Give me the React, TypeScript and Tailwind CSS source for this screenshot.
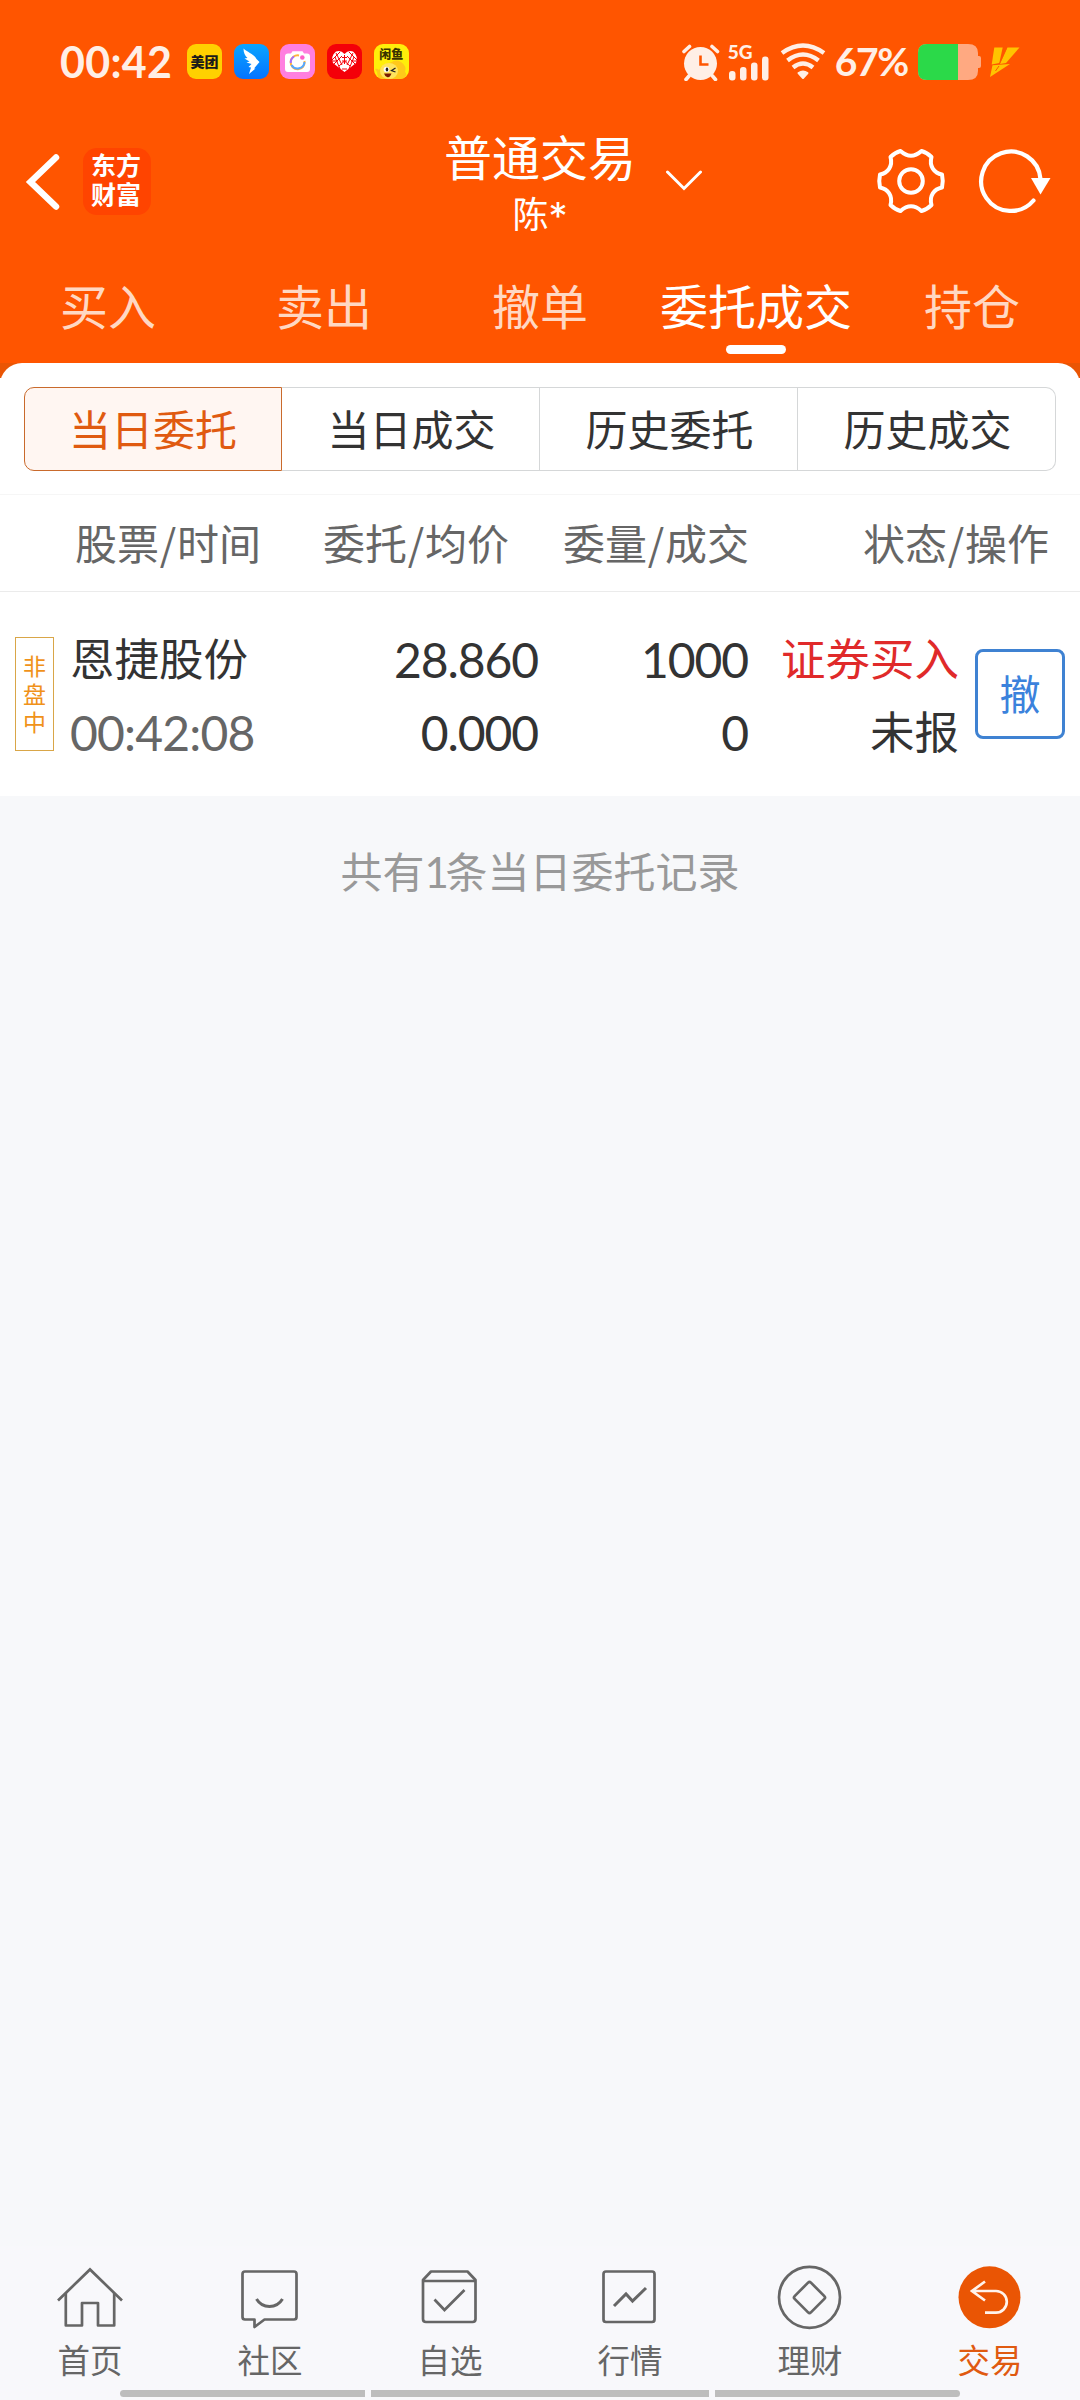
import type { ReactNode } from 'react'

const tabs = ['买入', '卖出', '撤单', '委托成交', '持仓']
const segments = ['当日委托', '当日成交', '历史委托', '历史成交']

const orders = [
  {
    tag: ['非', '盘', '中'],
    name: '恩捷股份',
    time: '00:42:08',
    price: '28.860',
    avg: '0.000',
    qty: '1000',
    done: '0',
    side: '证券买入',
    status: '未报',
  },
]

function AppBadges() {
  return (
    <div className="flex gap-[11.7px]">
      <div className="flex h-[35px] w-[35px] items-center justify-center rounded-[9px] bg-[#ffd100] pb-[1px] text-[14px] leading-none font-black text-[#1a1a1a]">
        美团
      </div>
      <svg className="h-[35px] w-[35px]" viewBox="0 0 35 35">
        <defs>
          <linearGradient id="ding" x1="0" y1="0" x2="0" y2="1">
            <stop offset="0" stopColor="#0aa5ff" />
            <stop offset="1" stopColor="#0573ff" />
          </linearGradient>
        </defs>
        <rect width="35" height="35" rx="9" fill="url(#ding)" />
        <path d="M9.500 4.500C13 8 20 10 22.500 15L25.500 18L20 24.500L21.500 24.500L15 30L17 23.500L14.500 23L17.500 20L12.500 18.500L15.500 17.500L10.500 14.500L13.500 14C11 12 9.500 8.500 9.500 4.500Z" fill="#fff" />
      </svg>
      <svg className="h-[35px] w-[35px]" viewBox="0 0 35 35">
        <rect width="35" height="35" rx="9" fill="#ff7fe0" />
        <path d="M8 9.500H11L12.500 7.300H22.500L24 9.500H27Q30 9.500 30 12.500V25Q30 28 27 28H8Q5 28 5 25V12.500Q5 9.500 8 9.500Z" fill="#fff" />
        <path d="M19 11.500A7 7 0 1 0 24.500 17" fill="none" stroke="#ffb13d" strokeWidth="2" />
        <path d="M11.500 21A7 7 0 0 0 24.500 18" fill="none" stroke="#55a8ff" strokeWidth="2" />
        <path d="M10.800 19A7 7 0 0 1 14 12.500" fill="none" stroke="#a86bff" strokeWidth="2" />
        <circle cx="22.300" cy="13.500" r="2.300" fill="#ff5fc8" />
      </svg>
      <svg className="h-[35px] w-[35px]" viewBox="0 0 35 35">
        <rect width="35" height="35" rx="9" fill="#f40009" />
        <path d="M17.500 28L6 19Q3.500 12 9 7.500Q14 6 17.500 10Q21 6 26 7.500Q31.500 12 29 19Z" fill="#fff" />
        <path d="M5 16L13 8M7 20L15 12M13 25L8 13M15 21L9 9M30 16L22 8M28 20L20 12M22 25L27 13M20 21L26 9M11 17H5M24 17H30M12 22L17.500 17L23 22M15 13.500H20M17.500 11V20M15 17H20M15 25L20 25" fill="none" stroke="#f40009" strokeWidth="1" />
      </svg>
      <div className="relative h-[35px] w-[35px] overflow-hidden rounded-[9px] bg-[#ffef0a]">
        <div className="pt-[3px] text-center text-[12px] leading-[13px] font-black text-[#3a3200]">闲鱼</div>
        <svg className="absolute inset-0" viewBox="0 0 35 35">
          <path d="M5 35Q3 31 3 28L1 25Q3 24 5 26Q9 19 17 18.500Q22 15 27 18Q33 22 31 28Q34 30 30 35Z" fill="#ffc91a" />
          <ellipse cx="15" cy="27" rx="9" ry="8" fill="#ffe45c" />
          <circle cx="12.500" cy="25.500" r="2.800" fill="#fff" />
          <ellipse cx="13" cy="25.500" rx="1.300" ry="2" fill="#222" />
          <path d="M21.500 24L17.500 26.500L21.500 28" fill="none" stroke="#222" strokeWidth="1.300" />
          <path d="M10 29.500H17.500Q16 34 13 33Q11 32.500 10 29.500Z" fill="#7a1a00" />
        </svg>
      </div>
    </div>
  )
}

function StatusBar() {
  return (
    <div className="flex h-[123px] items-center text-[#ffefe6]">
      <div className="w-[127px] pl-[60px] font-[Lato] text-[43px] leading-none font-bold tracking-[0.300px] whitespace-nowrap">00:42</div>
      <div className="ml-[60px]">
        <AppBadges />
      </div>
      <svg className="ml-[273px] h-[38px] w-[38px] shrink-0" viewBox="0 0 38 38">
        <circle cx="18.500" cy="20.500" r="16.500" fill="currentColor" />
        <path d="M2 8.500L7.500 3.500M35.500 8.500L30 3.500M7 33L4 36.500M30.500 33L33.500 36.500" stroke="currentColor" strokeWidth="3.600" strokeLinecap="round" />
        <path d="M18.500 12.500V21.500H26.500" fill="none" stroke="#ff5500" strokeWidth="2.600" />
      </svg>
      <div className="ml-[8px] flex h-[38px] w-[44px] flex-col">
        <div className="pt-[1px] font-[Lato] text-[19px] leading-[15px] font-black">5G</div>
        <svg className="-mt-[4px] h-[26px] w-[44px]" viewBox="0 0 44 26" fill="currentColor">
          <rect x="1" y="16" width="6.500" height="9.500" rx="3" />
          <rect x="12" y="12" width="6.500" height="13.500" rx="3" />
          <rect x="23" y="7.500" width="6.500" height="18" rx="3" />
          <rect x="34" y="1.500" width="6.500" height="24" rx="3" />
        </svg>
      </div>
      <svg className="ml-[8px] h-[38px] w-[46px]" viewBox="0 0 46 38" fill="none" stroke="currentColor" strokeWidth="4.400">
        <path d="M2 10Q23 -5 44 10" />
        <path d="M7.500 17.500Q23 5.500 38.500 17.500" />
        <path d="M13 24.500Q23 16.500 33 24.500" />
        <path d="M18.500 30Q23 27 27.500 30L23 35Z" fill="currentColor" strokeWidth="2" strokeLinejoin="round" />
      </svg>
      <div className="ml-[9px] w-[83px] font-[Lato] text-[39px] leading-none font-bold tracking-[-1.400px]">67%</div>
      <svg className="h-[36px] w-[64px]" viewBox="0 0 64 36">
        <path d="M9 0H50Q60 0 60 9V12H61Q63 12 63 14V22Q63 24 61 24H60V27Q60 36 50 36H9Q0 36 0 27V9Q0 0 9 0Z" fill="#ffa981" />
        <path d="M9 0H40V36H9Q0 36 0 27V9Q0 0 9 0Z" fill="#2bd949" />
      </svg>
      <svg className="ml-[7px] h-[32px] w-[32px]" viewBox="0 0 32 32" fill="#ffc400">
        <path d="M5.300 1.500H13.700L10.300 17L2.700 18.500Z" />
        <path d="M18.300 1.500H30.500L17 17L10.800 18Z" />
        <path d="M3.500 19.300L21 18L1 31Z" />
        <path d="M10 20L6.500 25" fill="none" stroke="#ff5500" strokeWidth="1" />
        <path d="M18 1.500L10.500 18" fill="none" stroke="#ff5500" strokeWidth="0.800" />
      </svg>
    </div>
  )
}

function TitleBar() {
  return (
    <div className="flex h-[117px] items-center text-white">
      <div className="flex w-[415px] items-center pl-[25px]">
        <svg className="h-[60px] w-[36px]" viewBox="0 0 36 60" fill="none" stroke="currentColor" strokeWidth="6.500" strokeLinecap="round">
          <path d="M31 5.500L5.500 30L31 54.500" />
        </svg>
        <div className="ml-[22px] flex h-[67px] w-[68px] flex-col items-center justify-center rounded-[14px] bg-[#ff4400] pr-[2px] pb-[5px] text-[25px] leading-[29px] font-bold">
          <span>东方</span>
          <span>财富</span>
        </div>
      </div>
      <div className="w-[250px] pt-[5px] text-center">
        <div className="text-[48px] leading-[60px]">普通交易</div>
        <div className="flex justify-center text-[36px] leading-[54px]">
          陈<span className="pt-[4px] font-[Inter] text-[38px] leading-[54px]">*</span>
        </div>
      </div>
      <svg className="h-[24px] w-[38px]" viewBox="0 0 38 24" fill="none" stroke="currentColor" strokeWidth="3" strokeLinecap="round">
        <path d="M2.500 2L19 18.500L35.500 2" />
      </svg>
      <svg className="ml-[172px] h-[72px] w-[72px]" viewBox="-36 -35 72 72" fill="none" stroke="currentColor" strokeWidth="4" strokeLinejoin="round">
        <path d="M-10.500 -30Q0 -20.500 10.500 -30Q16 -28.500 20.500 -24C18 -15 23 -8 31 -6.500Q32.500 0 31 6.500C23 8 18 15 20.500 24Q16 28.500 10.500 30Q0 20.500 -10.500 30Q-16 28.500 -20.500 24C-18 15 -23 8 -31 6.500Q-32.500 0 -31 -6.500C-23 -8 -18 -15 -20.500 -24Q-16 -28.500 -10.500 -30Z" />
        <circle r="11.800" />
      </svg>
      <svg className="ml-[28px] h-[72px] w-[80px]" viewBox="-36 -35 80 72">
        <path d="M29.500 -2A29.700 29.700 0 1 0 22.500 19.500" fill="none" stroke="currentColor" strokeWidth="4.200" strokeLinecap="round" />
        <path d="M20 -3H39.500L29.500 13.500Z" fill="currentColor" />
      </svg>
    </div>
  )
}

function Tabs() {
  return (
    <div className="grid h-[123px] grid-cols-5 text-[48px]">
      {tabs.map((t) => {
        const active = t === '委托成交'
        return (
          <div key={t} className={active ? 'flex flex-col items-center text-white' : 'flex flex-col items-center text-[#ffd8c3]'}>
            <div className="pt-[28px] leading-[72px] whitespace-nowrap">{t}</div>
            {active && <div className="mt-[5px] h-[9px] w-[60px] rounded-full bg-white" />}
          </div>
        )
      })}
    </div>
  )
}

function Segments() {
  return (
    <div className="mx-[24px] mt-[24px] flex h-[84px] text-[42px] text-[#333]">
      {segments.map((s, i) => (
        <div
          key={s}
          className={
            i === 0
              ? 'flex w-[258px] items-center justify-center rounded-l-[10px] border border-[#c96a2c] bg-[#fff6f2] pb-[3px] text-[#e05a10]'
              : i === 3
                ? 'flex w-[258px] items-center justify-center rounded-r-[10px] border border-l-0 border-[#d5d7d8] pb-[3px] pl-[2px]'
                : 'flex w-[258px] items-center justify-center border border-l-0 border-[#d5d7d8] pb-[3px] pl-[2px]'
          }
        >
          {s}
        </div>
      ))}
    </div>
  )
}

function HeadCell({ a, b, className }: { a: string; b: string; className: string }) {
  return (
    <div className={className}>
      {a}
      <span className="inline-block w-[18px] text-center">/</span>
      {b}
    </div>
  )
}

function OrderTable() {
  return (
    <div>
      <div className="mt-[23px] flex h-[98px] items-center border-y border-t-[#f6f6f6] border-b-[#ebebeb] pb-[3px] text-[42px] text-[#666]">
        <HeadCell a="股票" b="时间" className="w-[261px] text-right" />
        <HeadCell a="委托" b="均价" className="w-[248px] text-right" />
        <HeadCell a="委量" b="成交" className="w-[240px] text-right" />
        <HeadCell a="状态" b="操作" className="w-[300px] text-right" />
      </div>
      {orders.map((o) => (
        <div key={o.time} className="flex h-[204px] text-[44.500px] leading-[73px] text-[#333]">
          <div className="mt-[45px] ml-[15px] flex h-[114px] w-[39px] shrink-0 flex-col items-center justify-center border border-[#d9a648] pb-[3px] text-[23px] leading-[28px] text-[#f0921a]">
            {o.tag.map((c) => (
              <span key={c}>{c}</span>
            ))}
          </div>
          <div className="mt-[28px] ml-[16px] w-[230px]">
            <div>{o.name}</div>
            <div className="pt-[3px] font-[Lato] text-[48px] leading-[73px] tracking-[-0.800px] text-[#666]">{o.time}</div>
          </div>
          <div className="mt-[31px] w-[238px] text-right font-[Lato] text-[48px] tracking-[-1.100px]">
            <div>{o.price}</div>
            <div>{o.avg}</div>
          </div>
          <div className="mt-[31px] w-[210px] text-right font-[Lato] text-[48px] tracking-[-1.100px]">
            <div>{o.qty}</div>
            <div>{o.done}</div>
          </div>
          <div className="mt-[28px] w-[211px] text-right">
            <div className="text-[#e02a2a]">{o.side}</div>
            <div>{o.status}</div>
          </div>
          <button className="mt-[57px] ml-[16px] flex h-[90px] w-[90px] items-center justify-center rounded-[8px] border-3 border-[#3f82d2] pb-[4px] text-[41px] leading-none text-[#3b82dc]">
            撤
          </button>
        </div>
      ))}
    </div>
  )
}

function NavItem({ label, active, children }: { label: string; active?: boolean; children: ReactNode }) {
  return (
    <div className={active ? 'flex flex-col items-center text-[#e05a10]' : 'flex flex-col items-center text-[#666]'}>
      <svg className="h-[72px] w-[72px]" viewBox="0 0 72 72" fill="none" stroke="currentColor" strokeWidth="2.700">
        {children}
      </svg>
      <div className="text-[32.500px] leading-[52px]">{label}</div>
    </div>
  )
}

function BottomNav() {
  return (
    <div className="mt-auto bg-[#f8f8fb] pt-[15px]">
      <div className="grid h-[130px] grid-cols-6">
        <NavItem label="首页">
          <path d="M4 39.500L36 8.500L68 39.500" />
          <path d="M11.800 32V64.500H28V42H44V64.500H60.200V32" strokeLinejoin="round" />
        </NavItem>
        <NavItem label="社区">
          <path d="M11 10.500H60Q62.500 10.500 62.500 13V56Q62.500 58.500 60 58.500H30.500L20.500 66V58.500H11Q8.500 58.500 8.500 56V13Q8.500 10.500 11 10.500Z" strokeLinejoin="round" />
          <path d="M22.500 38Q27 45.500 35.500 45.500Q44 45.500 48.500 38" strokeWidth="3" />
        </NavItem>
        <NavItem label="自选">
          <path d="M9 19V58Q9 61 12 61H58.500Q61.500 61 61.500 58V19L53.500 10.500H17Z" strokeLinejoin="round" />
          <path d="M9 20H61.500M20.500 38.500L30.500 49L50.500 29" />
        </NavItem>
        <NavItem label="行情">
          <rect x="9.500" y="10.500" width="51" height="50.500" rx="2.500" />
          <path d="M20 45L32 33L38.500 40L52 27" strokeWidth="3" />
        </NavItem>
        <NavItem label="理财">
          <circle cx="35.500" cy="36.300" r="30.500" />
          <rect x="24" y="25" width="23" height="23" rx="2" transform="rotate(45 35.500 36.500)" />
        </NavItem>
        <NavItem label="交易" active>
          <circle cx="35.500" cy="36.300" r="31" fill="#ea5504" stroke="none" />
          <path d="M31 20.500L18 30L31 39.500M18 30H42A10.800 10.800 0 0 1 42 51.600H31" stroke="#fff3ec" />
        </NavItem>
      </div>
      <div className="flex h-[10px] -mt-px justify-center gap-[6px]">
        <div className="h-[7px] w-[245px] rounded-l-full bg-[#bdbdbd]" />
        <div className="h-[7px] w-[338px] bg-[#bdbdbd]" />
        <div className="h-[7px] w-[245px] rounded-r-full bg-[#bdbdbd]" />
      </div>
    </div>
  )
}

export default function App() {
  return (
    <div className="flex h-[2400px] w-[1080px] flex-col overflow-hidden bg-[#f7f8fa] font-['Noto_Sans_CJK_SC',sans-serif]">
      <header className="bg-[#ff5500]">
        <StatusBar />
        <TitleBar />
        <Tabs />
      </header>
      <main className="bg-[linear-gradient(#ea5504_15px,#ffffff_15px)]">
        <div className="flow-root rounded-t-[22px] bg-white">
          <Segments />
          <OrderTable />
        </div>
      </main>
      <div className="pt-[42px] text-center text-[42px] leading-[64px] text-[#999]">
        共有<span className="inline-block w-[21px] text-center font-[Lato]">1</span>条当日委托记录
      </div>
      <BottomNav />
    </div>
  )
}
